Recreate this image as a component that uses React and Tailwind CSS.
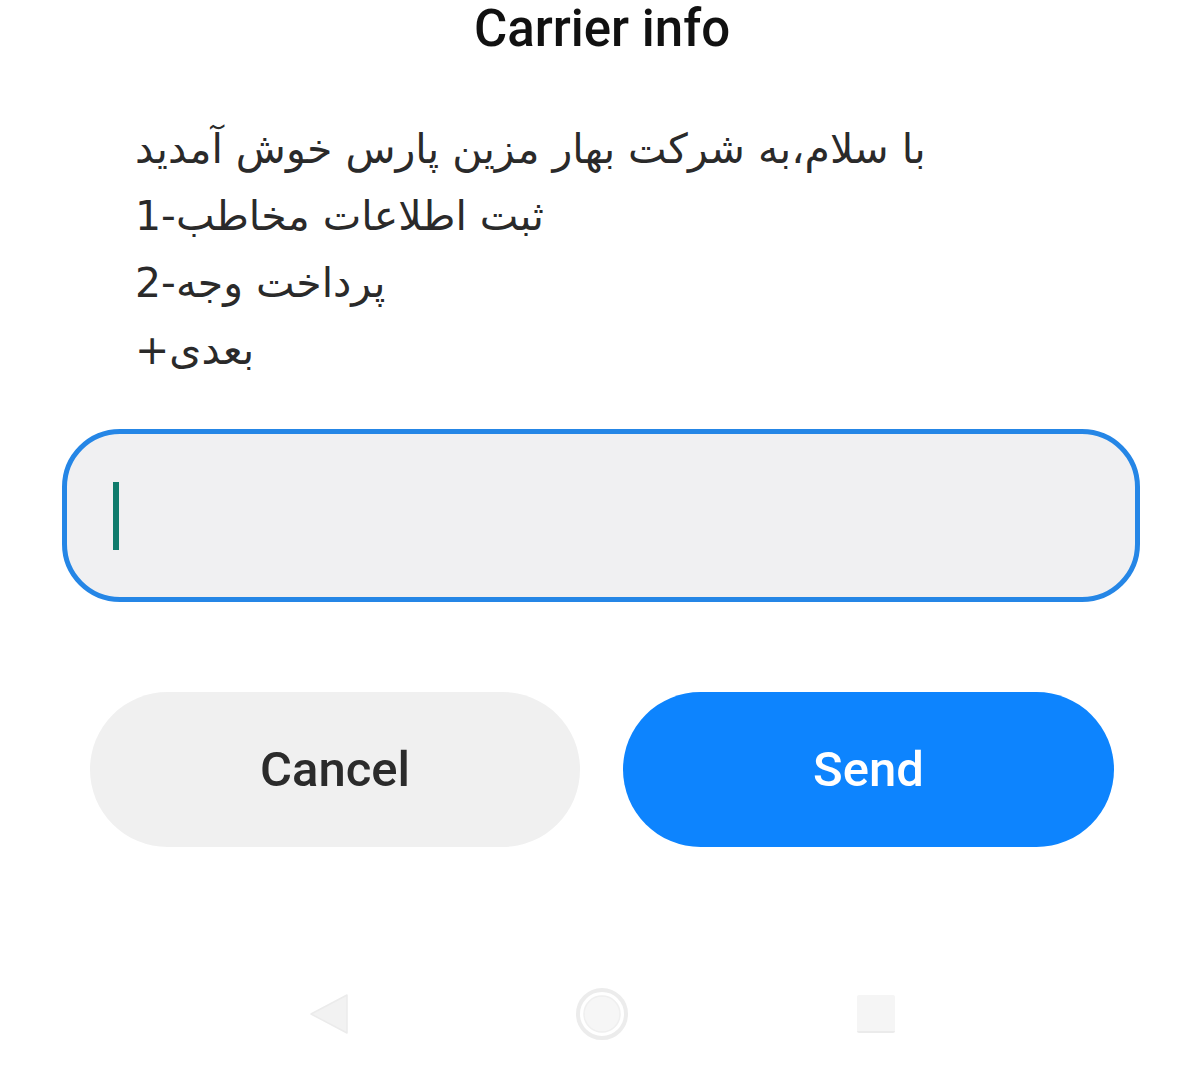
import React from 'react';

export default function App() {
  return (
    <div className="w-[1204px] h-[1080px] bg-white flex flex-col font-['Roboto',sans-serif] overflow-hidden">
      {/* Title */}
      <h1 className="mt-[0px] text-center text-[51px] leading-[58px] font-medium text-[#111]">Carrier info</h1>

      {/* Message */}
      <div
        dir="rtl"
        className="mt-[58px] ml-[135px] w-[860px] text-left text-[41px] leading-[67px] text-[#2a2a2a] font-['DejaVu_Sans',sans-serif]"
      >
        <div>با سلام،به شرکت بهار مزین پارس خوش آمدید</div>
        <div>ثبت اطلاعات مخاطب-1</div>
        <div>پرداخت وجه-2</div>
        <div>بعدی+</div>
      </div>

      {/* Input */}
      <div className="mt-[45px] ml-[62px] w-[1078px] h-[173px] rounded-[58px] border-[5px] border-[#2586e6] bg-[#f0f0f2] flex items-center pl-[46px]">
        <div className="w-[6px] h-[68px] bg-[#0f7b6c]" />
      </div>

      {/* Buttons */}
      <div className="mt-[90px] ml-[90px] flex gap-[43px]">
        <button className="w-[490px] h-[155px] rounded-full bg-[#f0f0f0] text-[#2b2b2b] text-[49px] font-medium">
          Cancel
        </button>
        <button className="w-[491px] h-[155px] rounded-full bg-[#0d84fe] text-white text-[49px] font-medium">
          Send
        </button>
      </div>

      {/* Nav bar */}
      <div className="mt-[142px] flex items-center justify-center gap-[218px] h-[50px]">
        <div className="w-[56px] flex justify-center">
          <svg width="42" height="42" viewBox="0 0 42 42">
            <path d="M40 2 L40 40 L4 21 Z" fill="#f2f2f2" stroke="#ebebeb" strokeWidth="1.5" strokeLinejoin="round" />
          </svg>
        </div>
        <div className="w-[56px] flex justify-center">
          <svg width="56" height="56" viewBox="0 0 56 56">
            <circle cx="28" cy="28" r="24" fill="none" stroke="#ececec" strokeWidth="4" />
            <circle cx="28" cy="28" r="18" fill="#f6f6f6" stroke="#efefef" strokeWidth="1.5" />
          </svg>
        </div>
        <div className="w-[56px] flex justify-center">
          <div className="w-[38px] h-[38px] bg-[#f5f5f5] rounded-[2px] border-b-[2px] border-[#ebebeb]" />
        </div>
      </div>
    </div>
  );
}
